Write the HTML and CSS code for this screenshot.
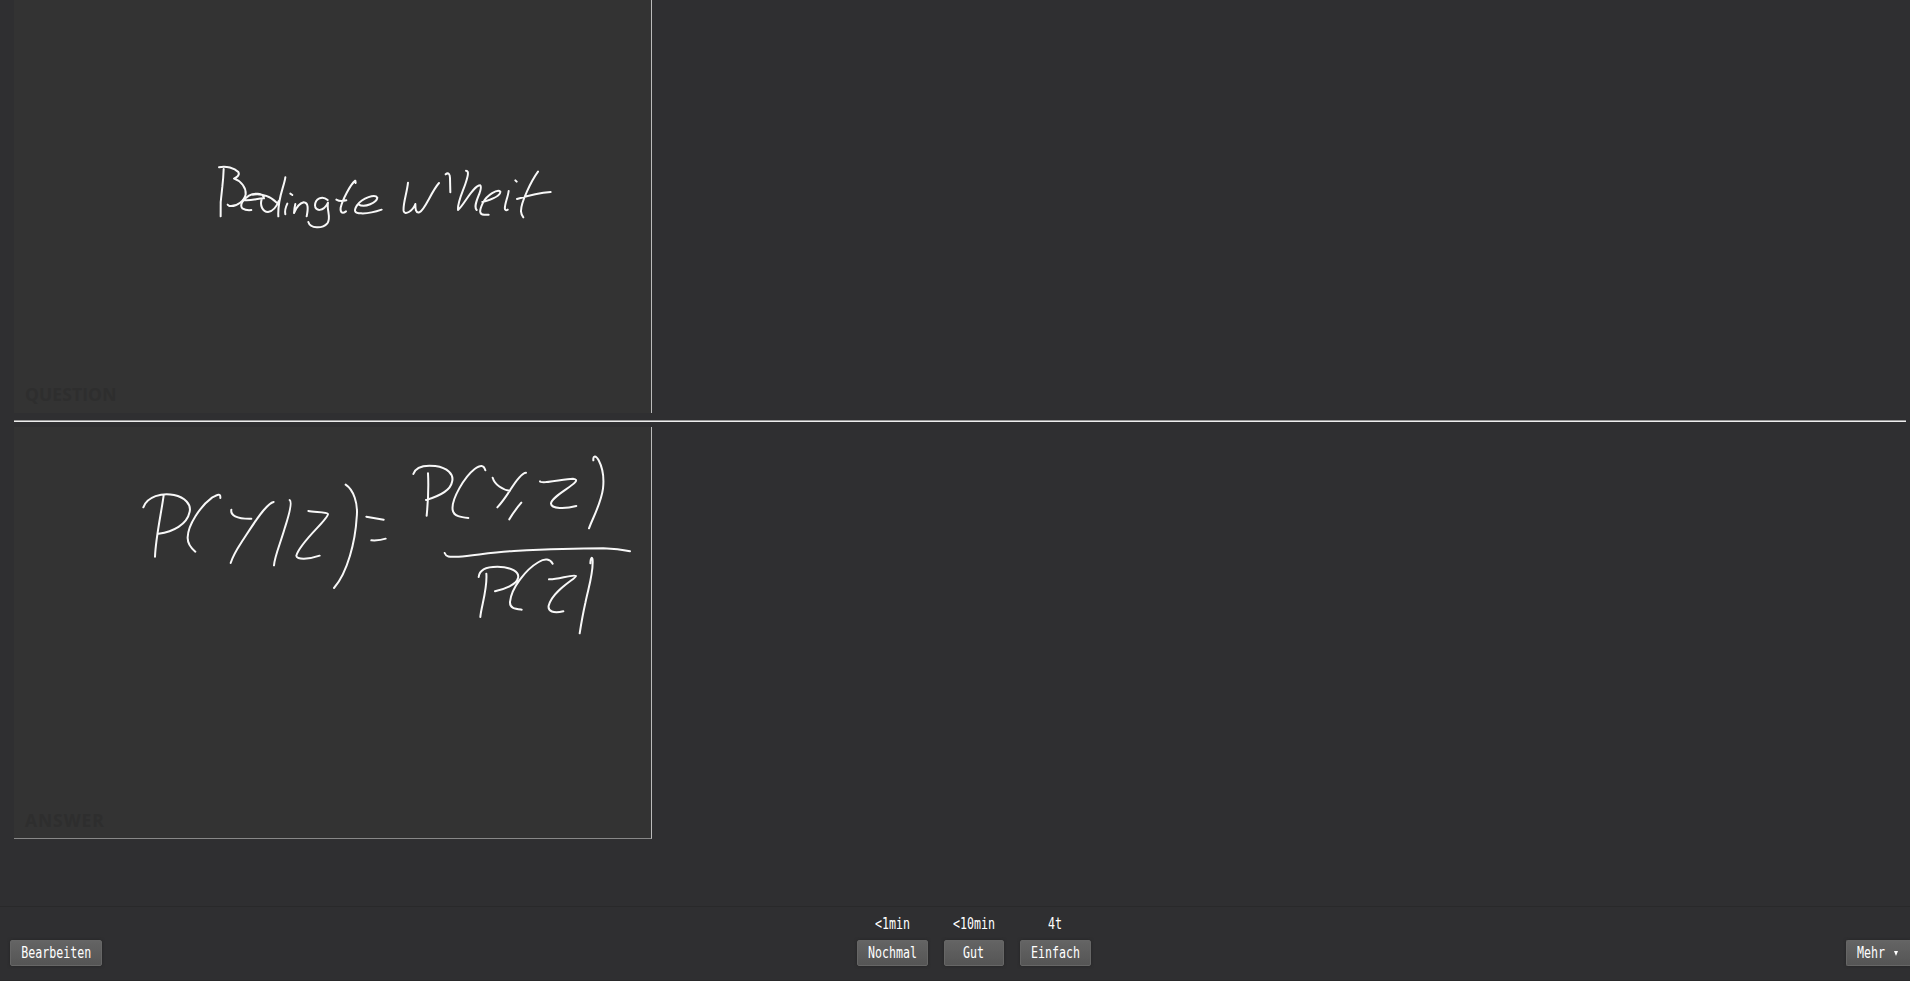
FILE: index.html
```html
<!DOCTYPE html>
<html lang="de">
<head>
<meta charset="utf-8">
<title>Karteikarte</title>
<link rel="stylesheet" href="styles.css">
</head>
<body>
<main class="review">
  <section class="card">
    <svg class="ink" viewBox="14 0 637 413" aria-label="Bedingte W'heit">
      <g transform="translate(200 150) scale(.33333)">
        <path d="M71 57Q70 85 67 110Q60 155 62 199M57 52C78 46 104 55 115 66C121 76 108 83 102 86C124 93 139 114 137 133C134 150 112 171 88 168L83 164"/>
        <path d="M133 150C151 153 177 144 192 145C190 127 160 129 147 137C129 148 118 165 127 175Q138 182 154 180M158 134C185 128 216 142 229 157M186 145C178 166 188 186 204 186C219 184 230 169 236 153M256 82C252 112 232 145 235 199"/>
        <path d="M262 161Q253 180 256 193M271 131L277 135M286 162Q283 174 282 189C289 172 299 160 311 157C325 158 325 174 320 199M383 150C366 135 346 147 345 166C345 184 370 187 384 158C379 180 395 204 382 220C367 237 331 236 325 216M467 99L466 92C451 103 427 151 422 173C420 188 427 192 438 184M409 149Q421 156 439 151M475 163C495 175 531 157 532 143C526 132 488 142 471 166C460 183 464 190 483 190C502 191 522 187 545 179"/>
      </g>
      <g transform="translate(370 150) scale(.33333)">
        <path d="M114 98C111 129 98 163 101 183C104 197 128 184 136 162C136 177 137 190 148 187C165 180 183 126 207 99M227 73C235 66 240 73 240 84L241 127M288 62C299 62 292 84 286 102C278 126 262 157 264 180C283 165 309 106 331 106C342 117 305 165 320 180M337 156C355 151 391 139 391 125C383 116 351 135 339 158C327 183 327 195 344 194L356 194M416 123C414 142 402 166 405 178Q408 183 413 179M436 91L440 95M504 65C485 91 452 157 453 184Q454 195 460 202M441 147C464 140 501 129 542 126"/>
      </g>
    </svg>
    <span class="side-name">QUESTION</span>
  </section>
  <hr class="divider">
  <section class="card card-answer">
    <svg class="ink" viewBox="14 427 637 411" aria-label="P(Y|Z) = P(Y,Z) / P(Z)">
      <g transform="translate(130 470) scale(.33333)">
        <path d="M40 112C51 80 96 67 132 75C165 82 184 103 179 125C171 164 129 185 86 191M101 76C94 128 77 204 75 260M271 84C272 68 262 74 246 83C211 109 174 164 173 202C172 222 184 235 196 245M304 119C301 135 318 147 364 146M431 96C404 101 352 192 335 216Q310 254 302 279M479 90C488 96 477 135 465 172C452 218 434 258 432 286M535 123C551 127 592 125 594 132C594 149 510 216 499 257C498 270 538 268 569 257M647 44C670 59 685 99 680 143C676 213 653 307 612 354M709 140L761 149M724 211C742 212 756 210 767 206"/>
      </g>
      <g transform="translate(400 440) scale(.33333)">
        <path d="M40 102C48 77 79 75 106 78C142 83 163 103 156 126C151 154 112 170 78 180M84 100C86 137 84 186 80 227M256 91C251 74 241 75 224 87C194 110 153 178 158 210C161 229 184 232 205 234M278 113C284 133 308 151 330 152M378 98C363 99 345 127 330 151Q309 184 292 202M364 188Q341 215 328 238M420 124C424 133 493 116 519 116C560 121 452 166 453 191C454 207 496 207 529 198M580 61C579 45 588 46 596 61C607 82 613 111 609 146C603 191 579 232 567 265M134 339C139 352 147 351 176 350C218 348 273 336 342 333C440 328 537 325 610 325Q655 327 690 334"/>
        <path d="M236 411C238 388 262 380 292 380C334 380 359 397 354 414C350 434 313 448 285 454M259 401C263 447 243 501 241 531M458 371C450 357 435 354 416 366C378 388 334 443 330 486C329 506 346 507 365 509M447 418C470 420 519 402 528 408C529 415 458 450 446 497C443 514 460 521 490 514M571 370C572 349 578 349 578 364C579 405 565 444 556 489Q547 529 539 580"/>
      </g>
    </svg>
    <span class="side-name answer-name">ANSWER</span>
  </section>
</main>
<footer class="toolbar">
  <div class="left"><button class="btn edit"><span class="label">Bearbeiten</span></button></div>
  <div class="ratings">
    <div class="rating"><span class="label">&lt;1min</span><button class="btn wide"><span class="label">Nochmal</span></button></div>
    <div class="rating"><span class="label">&lt;10min</span><button class="btn good"><span class="label">Gut</span></button></div>
    <div class="rating"><span class="label">4t</span><button class="btn wide"><span class="label">Einfach</span></button></div>
  </div>
  <div class="right"><button class="btn more"><span class="label">Mehr</span><span class="arrow"></span></button></div>
</footer>
</body>
</html>
```
FILE: styles.css
```css
* { box-sizing: border-box; }
body {
  margin: 0;
  height: 981px;
  display: flex;
  flex-direction: column;
  overflow: hidden;
  background: #2f2f31;
  color: #fff;
  font-family: "DejaVu Sans Mono", monospace;
}
.review { height: 906px; padding: 0 4px 0 14px; }
.card {
  position: relative;
  width: 638px;
  height: 413px;
  background: #333;
  border-right: 1px solid #bbb;
}
.card-answer { height: 412px; border-bottom: 1px solid #888; }
.ink {
  display: block;
  width: 637px;
  height: 100%;
  fill: none;
  stroke: #f8f8f8;
  stroke-width: 6;
  stroke-linecap: round;
  stroke-linejoin: round;
}
.side-name {
  position: absolute;
  left: 11px;
  bottom: 8px;
  color: #2e2e2e;
  font: bold 17.5px/22px "Open Sans", sans-serif;
  letter-spacing: .1px;
}
.answer-name { bottom: 7px; letter-spacing: .9px; }
.divider {
  height: 2px;
  margin: 7px 0 5px;
  border: 0;
  border-top: 1px solid #999;
  background: #eee;
}
.toolbar {
  height: 75px;
  display: grid;
  grid-template-columns: 1fr auto 1fr;
  align-items: end;
  padding: 0 0 14px 10px;
  border-top: 1px solid #29292a;
  border-bottom: 1px solid #29292a;
}
.ratings { display: flex; gap: 16px; margin-left: 28px; }
.rating { display: flex; flex-direction: column; align-items: center; gap: 6px; }
.left, .right { display: flex; }
.right { justify-content: flex-end; }
.btn {
  display: flex;
  align-items: center;
  justify-content: center;
  height: 26px;
  padding: 0;
  border: 1px solid #666;
  border-radius: 2px;
  background: linear-gradient(#646464, #555);
  box-shadow: 0 0 3px #232324;
  color: #fff;
}
.edit { width: 92px; }
.wide { width: 71px; }
.good { width: 60px; }
.more { width: 64px; gap: 6px; border-right: 0; border-radius: 2px 0 0 2px; }
.label {
  display: block;
  font: 15px/20px "DejaVu Sans Mono", monospace;
  transform: scaleX(.775);
}
.more .label { margin: 0 -1px 0 -6px; }
.arrow {
  border: solid transparent;
  border-width: 5px 2.5px 0;
  border-top-color: #fff;
}
```
